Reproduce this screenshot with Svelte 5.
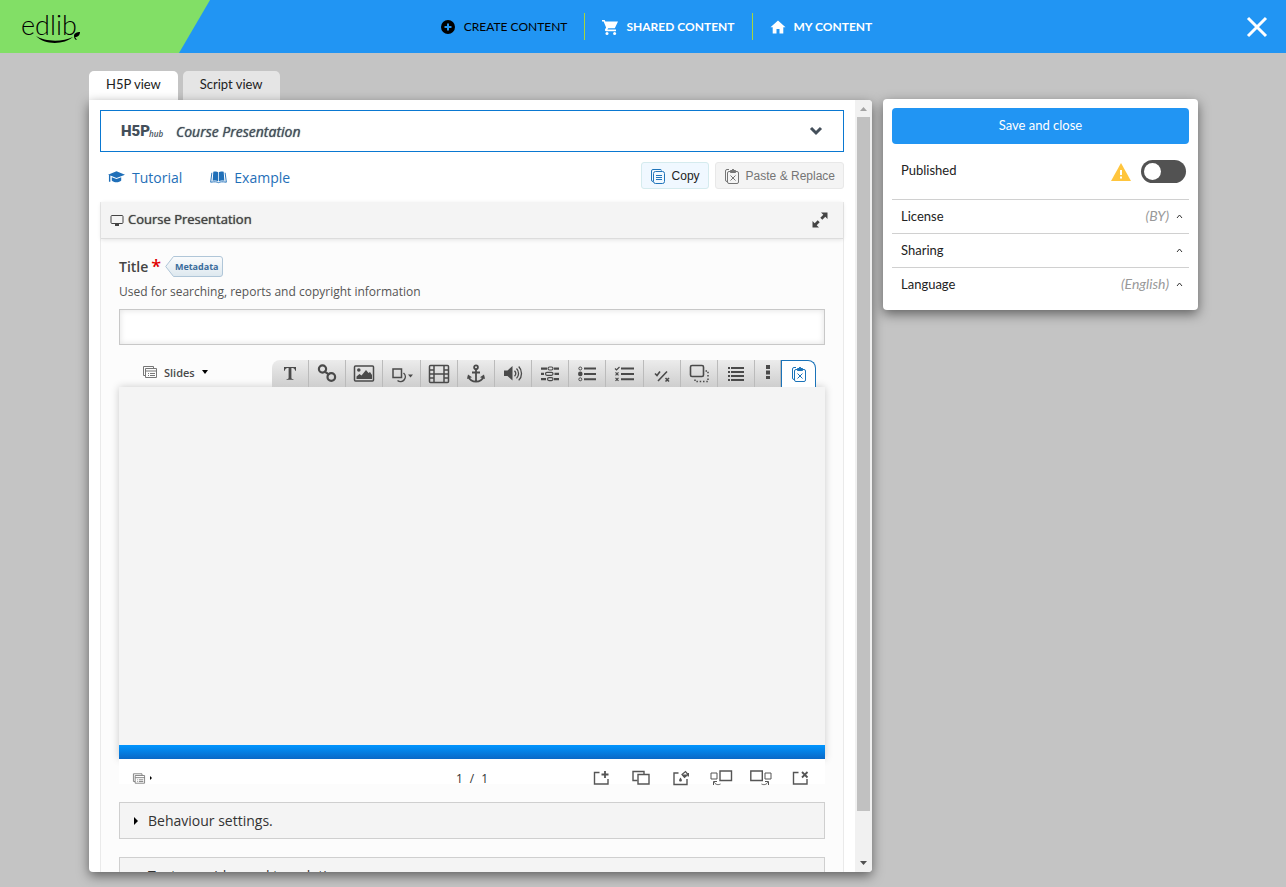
<script>
  let activeTab = $state("h5p");
  let title = $state("");
  let published = $state(false);

  const tabs = [
    { id: "h5p", label: "H5P view" },
    { id: "script", label: "Script view" },
  ];

  const navItems = [
    {
      label: "Create content",
      active: true,
      icon: '<path fill-rule="evenodd" d="M8 1a7 7 0 100 14A7 7 0 008 1zM7 4.500h2V7h2.500v2H9v2.500H7V9H4.500V7H7z"/>',
    },
    {
      label: "Shared content",
      icon: '<path d="M0 1h2.600l.8 1.600H16l-3.200 6.600H6.200L5.400 10.600H14v1.600H4.200c-1.200 0-1.600-1-1.100-1.900l1-1.800L1.600 2.600H0z"/><circle cx="5" cy="14.400" r="1.500"/><circle cx="12.600" cy="14.400" r="1.500"/>',
    },
    {
      label: "My content",
      icon: '<path d="M8 1.500l7.500 6.700h-2.200v6.300H9.500V10h-3v4.500H2.700V8.200H.5z"/>',
    },
  ];

  // Toolbar glyphs share a 22 x 20 box
  const tools = [
    {
      name: "Text",
      icon: '<path d="M5 3h12v3.800h-.8c-.4-2-1.200-2.800-2.800-2.800h-1v9.500c0 1.200.4 1.400 2 1.500v.8H7.600v-.8c1.600-.1 2-.3 2-1.500V4h-1c-1.600 0-2.400.8-2.800 2.800H5z" fill="currentColor"/>',
    },
    {
      name: "Link",
      icon: '<g fill="none" stroke="currentColor" stroke-width="2.200"><circle cx="6.500" cy="5" r="3.600"/><circle cx="15.300" cy="13" r="3.800"/><path d="M8 7.200l5.500 3.600"/></g>',
    },
    {
      name: "Image",
      icon: '<rect x="1.500" y="2" width="19" height="15" rx="1" fill="none" stroke="currentColor" stroke-width="1.500"/><circle cx="5.800" cy="6" r="1.800" fill="currentColor"/><path d="M3.500 15v-2.500l3-2.500 2 1.500 4.500-5.500 2.500 3 1.500-1 2 3v4z" fill="currentColor"/>',
    },
    {
      name: "Shapes",
      icon: '<g fill="none" stroke="currentColor" stroke-width="1.500"><path d="M2 5h8.500v8.500H2z"/><path d="M12.500 9a4.500 4.500 0 11-6 7.500"/></g><path d="M17 10.500h5l-2.500 3z" fill="currentColor"/>',
    },
    {
      name: "Video",
      icon: '<g fill="none" stroke="currentColor" stroke-width="1.500"><rect x="1.500" y="1.500" width="19" height="17" rx="1"/><path d="M6 2v16M16 2v16M6 10h10M1.500 6H6M1.500 10H6M1.500 14H6M16 6h4.500M16 10h4.500M16 14h4.500"/></g>',
    },
    {
      name: "Go to slide",
      icon: '<g fill="none" stroke="currentColor" stroke-width="1.800"><circle cx="11" cy="3.200" r="1.900"/><path d="M11 5.500V17.500M7 8.500h8M3.500 12.500c.5 3 4 5.200 7.500 5.200s7-2.200 7.500-5.200"/></g><path d="M2 15l1-4.500 4 2.800zM20 15l-1-4.500-4 2.800z" fill="currentColor"/>',
    },
    {
      name: "Audio",
      icon: '<path d="M2 6.500h3.500L10.500 2v14.500L5.500 12H2z" fill="currentColor"/><g fill="none" stroke="currentColor" stroke-width="1.300"><path d="M12.500 6.700a4 4 0 010 5.500M14.500 4.500a7 7 0 010 9.900M16.700 2.500a10 10 0 010 13.900"/></g>',
    },
    {
      name: "Fill in the Blanks",
      icon: '<g fill="currentColor"><path d="M2 3.500h6v2.200H2zM15 3.500h5v2.200h-5zM2 8.700h3v2.200H2zM15.500 8.700H20v2.200h-4.500zM2 14h5v2.200H2zM15 14h5v2.200h-5z"/></g><g fill="none" stroke="currentColor" stroke-width="1.200"><rect x="9" y="3" width="5" height="3" rx="1.500"/><rect x="6.500" y="8.300" width="7.500" height="3" rx="1.500"/><rect x="8.500" y="13.600" width="5.500" height="3" rx="1.500"/></g>',
    },
    {
      name: "Single Choice",
      icon: '<path d="M8 3.500h12v2H8zM8 8.900h12v2H8zM8 14.300h12v2H8z" fill="currentColor"/><g fill="none" stroke="currentColor"><circle cx="4.300" cy="4.500" r="1.500"/><circle cx="4.300" cy="15.300" r="1.500"/></g><circle cx="4.300" cy="9.900" r="2.300" fill="currentColor"/>',
    },
    {
      name: "Multiple Choice",
      icon: '<path d="M8 3.500h13v2H8zM8 8.900h13v2H8zM8 14.300h13v2H8z" fill="currentColor"/><path d="M2 4.500l1.500 1.500L6.500 3M2.500 8.300l3 3M5.500 8.300l-3 3M2.500 13.800l3 3M5.500 13.800l-3 3" fill="none" stroke="currentColor" stroke-width="1.200"/>',
    },
    {
      name: "True/False",
      icon: '<path d="M4 9.500l2 2 3-4M7 17L16 7.500M14.500 14l3.500 3.500M18 14l-3.500 3.500" fill="none" stroke="currentColor" stroke-width="1.600"/>',
    },
    {
      name: "Drag and Drop",
      icon: '<rect x="2.500" y="1.500" width="13" height="11" rx="1.500" fill="none" stroke="currentColor" stroke-width="1.600"/><path d="M17.500 7H20v10.500H7V15" fill="none" stroke="currentColor" stroke-width="1.500" stroke-dasharray="1.500 1.800"/>',
    },
    {
      name: "Summary",
      icon: '<path d="M3 3h2v2H3zM6 3h13v2H6zM3 7h2v2H3zM6 7h13v2H6zM3 11h2v2H3zM6 11h13v2H6zM3 15h2v2H3zM6 15h13v2H6z" fill="currentColor"/>',
    },
  ];

  // Slide controls share a 22 x 20 box
  const slideActions = [
    {
      name: "Add new slide",
      icon: '<path d="M9.500 4.500H4.500v11.500h13.500V11"/><path d="M15 3v7M11.500 6.500h7" stroke-width="1.800"/>',
    },
    {
      name: "Clone slide",
      icon: '<path d="M7.500 12.500H3v-9h11V6.500"/><path d="M8 6.500h11v9.500H8z"/>',
    },
    {
      name: "Background settings",
      icon: '<path d="M8.500 5H4v11.500h13V11"/><path d="M12 6.500L15.500 3.500l2.500 3-3.500 3z" stroke-width="1.200"/><path d="M12 6.500h6l-3.500 3z" fill="currentColor" stroke="none"/><path d="M18.300 5v3.500" /><path d="M10.500 9.500c-2 2.500-1.700 4 0 4s2-1.500 0-4z" fill="currentColor" stroke="none"/>',
    },
    {
      name: "Move slide left",
      icon: '<path d="M10 3h11.500v9.500H10z"/><path d="M1 5h6v6H1z" stroke-width="1"/><path d="M10.500 16c-3 1.500-5.500 0-6.500-2M3.500 17v-3.500H7" stroke-width="1"/>',
    },
    {
      name: "Move slide right",
      icon: '<path d="M.8 3h11.500v9.500H.8z"/><path d="M15 5h6v6h-6z" stroke-width="1"/><path d="M11.500 16c3 1.500 5.500 0 6.500-2M18.500 17v-3.500H15" stroke-width="1"/>',
    },
    {
      name: "Delete slide",
      icon: '<path d="M8.500 4.500H3.500v11.500h13.500V11"/><path d="M12 4l5.500 5.500M17.500 4l-5.500 5.500" stroke-width="1.800"/>',
    },
  ];

  const settings = [
    { label: "License", value: "(BY)" },
    { label: "Sharing", value: "" },
    { label: "Language", value: "(English)" },
  ];
</script>

{#snippet slidesIcon()}
  <svg class="slides-icon" viewBox="0 0 14 12" fill="none" stroke="currentColor">
    <path d="M2.500 9.500h-2v-9h10v2" />
    <path d="M2.500 2.500h11v9h-11zM2.500 5h11M5 7.500h1M7 7.500h5M5 9.500h1M7 9.500h5" />
  </svg>
{/snippet}

{#snippet pasteIcon()}
  <svg class="clip-icon" viewBox="0 0 16 16" fill="none" stroke="currentColor">
    <path d="M3 13.500q-1.500 0-1.500-1.500V3q0-1.500 1.500-1.500h2" />
    <path d="M6.500 3.500h-1.500q-1.500 0-1.500 1.500v9q0 1.500 1.500 1.500h8q1.500 0 1.500-1.500V5q0-1.500-1.500-1.500h-1.500" />
    <path d="M6.500 2.500h1.500l1-1.500 1 1.500h1.500v2h-5z" fill="currentColor" />
    <path d="M6.500 7.500l5 5M11.500 7.500l-5 5" />
  </svg>
{/snippet}

<div class="page">
  <header class="topbar">
    <a class="logo" href="#home" aria-label="edlib">
      <svg viewBox="0 0 64 32">
        <text x="0" y="24">edlib</text>
        <path d="M15 25c9 6 27 6 37 1-9 8-29 8-37-1z" />
        <path d="M53 25c0-3 3-4 6-4 0 3-2 5-5 5 1 1 1 2 2 3-2 0-3-2-3-4z" />
      </svg>
    </a>
    <nav>
      {#each navItems as item}
        <a href="#content" class:active={item.active}>
          <svg viewBox="0 0 16 16" fill="currentColor">{@html item.icon}</svg>
          {item.label}
        </a>
      {/each}
    </nav>
    <button class="close" aria-label="Close">
      <svg viewBox="0 0 22 22"><path d="M2 2l18 18M20 2L2 20" /></svg>
    </button>
  </header>

  <main>
    <section class="editor-column">
      <div class="tabs">
        {#each tabs as tab}
          <button class:selected={activeTab === tab.id} onclick={() => (activeTab = tab.id)}>
            {tab.label}
          </button>
        {/each}
      </div>

      <div class="panel">
        <div class="content">
          <button class="hub">
            <svg class="h5p" viewBox="0 0 42 16">
              <text class="h5p-name" x="0" y="13">H5P</text>
              <text class="h5p-hub" x="28" y="14">hub</text>
            </svg>
            <span>Course Presentation</span>
            <svg class="chevron" viewBox="0 0 14 10"><path d="M2 2l5 5 5-5" /></svg>
          </button>

          <div class="links">
            <a href="#tutorial">
              <svg viewBox="0 0 18 14" fill="currentColor">
                <path d="M9 1l9 3.500L9 8 2.500 5.500V12h-1.500V5L0 4.500z" />
                <path d="M4 7.200l5 2 5-2v3.600c-2 2.500-8 2.500-10 0z" />
              </svg>
              Tutorial
            </a>
            <a href="#example">
              <svg viewBox="0 0 18 14" fill="currentColor">
                <path d="M3.500 1.500C6 .8 7.500 1 8.600 2v9.500c-1.500-1-3.600-1-5.800-.5zM14.500 1.500C12 .8 10.500 1 9.400 2v9.500c1.500-1 3.600-1 5.800-.5z" />
                <path d="M2 2.500L.7 12.500c4-.6 6.500-.6 8.300.5 1.800-1.100 4.300-1.100 8.300-.5L16 2.500" fill="none" stroke="currentColor" />
              </svg>
              Example
            </a>
            <button class="clip copy">
              <svg class="clip-icon" viewBox="0 0 16 16" fill="none" stroke="currentColor">
                <path d="M3 13.500q-1.500 0-1.500-1.500V3q0-1.500 1.500-1.500h7q1.500 0 1.500 1" />
                <rect x="3.500" y="3.500" width="11" height="12" rx="2" />
                <path d="M6 7.500h6M6 9.500h6M6 11.500h6" />
              </svg>
              Copy
            </button>
            <button class="clip paste">{@render pasteIcon()} Paste &amp; Replace</button>
          </div>

          <div class="editor">
            <div class="editor-head">
              <svg class="screen" viewBox="0 0 14 12" fill="none" stroke="currentColor">
                <rect x="1" y="1.500" width="12" height="8" rx="1" />
                <path d="M5 11h4" stroke-width="2" />
              </svg>
              <h1>Course Presentation</h1>
              <button class="fullscreen" aria-label="Fullscreen">
                <svg viewBox="0 0 18 18" fill="currentColor">
                  <path d="M10 1.500h6.500V8l-2.200-2.200-3 3-2-2 3-3zM8 16.500H1.500V10l2.200 2.200 3-3 2 2-3 3z" />
                </svg>
              </button>
            </div>

            <div class="editor-body">
              <div class="title-row">
                <label for="title">Title<span>*</span></label>
                <button class="metadata">
                  <svg viewBox="0 0 58 21">
                    <defs>
                      <linearGradient id="meta" x1="0" y1="0" x2="0" y2="1">
                        <stop offset="0" stop-color="#fbfcfd" />
                        <stop offset="1" stop-color="#dde8ef" />
                      </linearGradient>
                    </defs>
                    <path d="M.7 10.500L8.500.5H55q2.500 0 2.500 2.500v15q0 2.500-2.500 2.500H8.500z" fill="url(#meta)" stroke="#b0c6d8" />
                  </svg>
                  <span>Metadata</span>
                </button>
              </div>
              <p class="hint">Used for searching, reports and copyright information</p>
              <input id="title" type="text" bind:value={title} />

              <div class="toolbar">
                <button class="slides">
                  {@render slidesIcon()}
                  Slides
                  <svg class="caret" viewBox="0 0 6 4"><path d="M0 0h6L3 4z" /></svg>
                </button>
                <div class="tools">
                  {#each tools as tool}
                    <button aria-label={tool.name}>
                      <svg viewBox="0 0 22 20">{@html tool.icon}</svg>
                    </button>
                  {/each}
                  <button class="more" aria-label="More">
                    <svg viewBox="0 0 4 20"><path d="M0 1h4v4H0zM0 6.500h4v4H0zM0 12h4v3H0z" fill="currentColor" /></svg>
                  </button>
                  <button class="paste-tool" aria-label="Paste">{@render pasteIcon()}</button>
                </div>
              </div>

              <div class="stage">
                <div class="canvas"></div>
                <div class="progress"></div>
              </div>

              <div class="slide-footer">
                <button class="slide-list" aria-label="Show slides">
                  {@render slidesIcon()}
                  <svg class="dot" viewBox="0 0 2 4"><path d="M0 0l2 2-2 2z" /></svg>
                </button>
                <div class="counter"><span>1</span><span>/</span><span>1</span></div>
                <div class="slide-actions">
                  {#each slideActions as action}
                    <button aria-label={action.name}>
                      <svg viewBox="0 0 22 20" fill="none" stroke="currentColor" stroke-width="1.400">
                        {@html action.icon}
                      </svg>
                    </button>
                  {/each}
                </div>
              </div>

              {#each ["Behaviour settings.", "Text overrides and translations"] as group}
                <button class="group">
                  <svg viewBox="0 0 4 8"><path d="M0 0l4 4-4 4z" /></svg>
                  {group}
                </button>
              {/each}
            </div>
          </div>
        </div>

        <div class="scrollbar">
          <svg viewBox="0 0 17 17"><path d="M5 11h7L8.500 7z" fill="#a3a3a3" /></svg>
          <div class="thumb"></div>
          <svg viewBox="0 0 17 17"><path d="M5 6h7l-3.500 4z" fill="#505050" /></svg>
        </div>
      </div>
    </section>

    <aside>
      <button class="save">Save and close</button>
      <div class="published">
        <label for="published">Published</label>
        <svg viewBox="0 0 20 18">
          <path d="M10 0l10 18H0z" fill="#ffc53d" />
          <path d="M9 7h2v5H9zM9 13.500h2v2H9z" fill="#fff" />
        </svg>
        <input id="published" type="checkbox" bind:checked={published} />
      </div>
      {#each settings as setting}
        <button class="setting">
          <span>{setting.label}</span>
          <em>{setting.value}</em>
          <svg viewBox="0 0 7 5"><path d="M1 4l2.500-3L6 4" /></svg>
        </button>
      {/each}
    </aside>
  </main>
</div>

<style>
  :global(body) {
    background: #c4c4c4;
  }

  .page {
    height: 100vh;
    display: flex;
    flex-direction: column;
    overflow: hidden;
    font-family: Lato, sans-serif;
    font-size: 13px;
    color: #222;
  }

  .page :global(*) {
    box-sizing: border-box;
  }

  svg {
    display: block;
    flex: none;
    overflow: visible;
  }

  button {
    font: inherit;
    color: inherit;
    background: none;
    border: 0;
    padding: 0;
    cursor: pointer;
  }

  a {
    text-decoration: none;
  }

  .topbar {
    display: grid;
    grid-template-columns: 210px 1fr 184px;
    flex: none;
    height: 53px;
    background: #2195f3;
  }

  .logo {
    display: flex;
    align-items: center;
    padding-left: 21px;
    background: #82df66;
    clip-path: polygon(0 0, 100% 0, 179px 100%, 0 100%);
  }

  .logo svg {
    width: 64px;
    height: 32px;
  }

  .logo text {
    font-size: 27px;
    font-weight: 300;
  }

  nav {
    display: flex;
    align-items: center;
    justify-content: center;
  }

  nav a {
    display: flex;
    align-items: center;
    gap: 8px;
    height: 27px;
    padding: 0 17px;
    border-left: 1px solid #a6d63c;
    color: #fff;
    font-size: 12px;
    font-weight: 700;
    text-transform: uppercase;
    white-space: nowrap;
  }

  nav a.active {
    border-left: 0;
    color: #000;
    font-weight: 400;
  }

  nav svg {
    width: 16px;
    height: 16px;
  }

  .close {
    justify-self: end;
    padding: 0 18px;
  }

  .close svg {
    width: 22px;
    height: 22px;
    stroke: #fff;
    stroke-width: 3;
  }

  main {
    display: grid;
    grid-template-columns: minmax(0, 1fr) 315px;
    gap: 11px;
    flex: 1;
    min-height: 0;
    padding: 18px 88px 15px 89px;
  }

  .editor-column {
    display: flex;
    flex-direction: column;
    min-height: 0;
  }

  .tabs {
    display: flex;
    gap: 5px;
    height: 29px;
  }

  .tabs button {
    padding: 0 17px 3px;
    background: #e5e5e5;
    border-radius: 5px 5px 0 0;
  }

  .tabs button.selected {
    background: #fff;
  }

  .panel {
    display: flex;
    flex: 1;
    min-height: 0;
    overflow: hidden;
    background: #fff;
    border-radius: 0 4px 4px 4px;
    box-shadow: 0 4px 12px rgba(0, 0, 0, 0.5);
  }

  .content {
    flex: 1;
    min-width: 0;
    padding: 10px 11px 0;
    overflow: hidden;
    font-family: "Open Sans", sans-serif;
    font-size: 14px;
    color: #333;
  }

  .scrollbar {
    display: flex;
    flex-direction: column;
    width: 17px;
    background: #f1f1f1;
  }

  .scrollbar svg {
    width: 17px;
    height: 17px;
  }

  .thumb {
    flex: 1;
    margin: 0 2px 44px;
    background: #c1c1c1;
  }

  .hub {
    display: flex;
    align-items: center;
    width: 100%;
    height: 42px;
    padding: 0 20px;
    border: 1px solid #0a78d1;
    color: #444f5a;
    font-style: italic;
  }

  .hub span,
  h1 {
    text-shadow: 0 0 1px currentColor;
  }

  .h5p {
    width: 42px;
    height: 16px;
    margin-right: 13px;
    fill: #444f5a;
  }

  .h5p-name {
    font: 900 15px Roboto, sans-serif;
  }

  .h5p-hub {
    font: italic 600 8px "Open Sans", sans-serif;
  }

  .chevron {
    width: 14px;
    height: 10px;
    margin-left: auto;
    fill: none;
    stroke: #444f5a;
    stroke-width: 3;
  }

  .links {
    display: flex;
    align-items: center;
    height: 50px;
    padding-left: 8px;
  }

  .links a {
    display: flex;
    align-items: center;
    gap: 7px;
    margin-right: 28px;
    color: #1f6fb8;
  }

  .links a svg {
    width: 17px;
    height: 14px;
  }

  .clip {
    display: flex;
    align-items: center;
    gap: 6px;
    height: 27px;
    margin-bottom: 4px;
    padding: 1px 8px 0;
    border: 1px solid #e8e8e8;
    border-radius: 3px;
    background: #f4f4f4;
    color: #757575;
    font: 12px "Liberation Sans", sans-serif;
  }

  .clip-icon {
    width: 16px;
    height: 16px;
  }

  .copy {
    margin-left: auto;
    margin-right: 6px;
    border-color: #d5ebee;
    background: #f0f8ff;
    color: #222;
  }

  .copy svg {
    color: #1f74ba;
  }

  .editor {
    border: 1px solid #eaeaea;
    border-top: 0;
    background: #fcfcfc;
  }

  .editor-head {
    display: flex;
    align-items: center;
    height: 37px;
    padding: 0 14px 0 9px;
    border-bottom: 1px solid #dcdcdc;
    background: #f4f4f4;
    box-shadow: 0 1px 4px rgba(0, 0, 0, 0.1);
    color: #444;
  }

  .screen {
    width: 14px;
    height: 12px;
    margin-right: 4px;
  }

  h1 {
    margin: 0;
    padding-bottom: 2px;
    font-size: 13px;
    font-weight: 400;
  }

  .fullscreen {
    margin-left: auto;
  }

  .fullscreen svg {
    width: 18px;
    height: 18px;
  }

  .editor-body {
    padding: 17px 18px;
  }

  .title-row {
    display: flex;
    align-items: center;
    gap: 4px;
    height: 21px;
    color: #444;
    font-weight: 600;
  }

  .title-row label {
    display: flex;
    line-height: 20px;
  }

  .title-row label span {
    padding-left: 3px;
    color: #e00000;
    font-size: 18px;
    line-height: 18px;
  }

  .metadata {
    position: relative;
    width: 58px;
    height: 21px;
    padding-left: 5px;
    color: #3a6c9c;
    font-size: 9px;
    font-weight: 700;
  }

  .metadata svg {
    position: absolute;
    inset: 0;
  }

  .metadata span {
    position: relative;
  }

  .hint {
    margin: 7px 0 9px;
    font-size: 12px;
    line-height: 16px;
    color: #555;
  }

  input[type="text"] {
    display: block;
    width: 100%;
    height: 36px;
    padding: 0 10px;
    border: 1px solid #c8c8c8;
    background: #fff;
    box-shadow: inset 0 0 6px rgba(0, 0, 0, 0.12);
    font: inherit;
  }

  .toolbar {
    display: flex;
    justify-content: space-between;
    height: 27px;
    margin-top: 15px;
    padding: 0 9px 0 24px;
    color: #4a4a4a;
  }

  .slides {
    display: flex;
    align-items: center;
    gap: 7px;
    padding-bottom: 3px;
    font-size: 11px;
    font-weight: 600;
  }

  .slides-icon {
    width: 14px;
    height: 12px;
    color: #777;
  }

  .caret {
    width: 6px;
    height: 4px;
  }

  .tools {
    display: flex;
    width: 544px;
  }

  .tools button {
    display: flex;
    align-items: center;
    justify-content: center;
    flex: 1;
    border-right: 1px solid #bbb;
    background: linear-gradient(#ececec, #cecece);
  }

  .tools button:first-child {
    border-top-left-radius: 8px;
  }

  .tools button > svg {
    width: 22px;
    height: 20px;
  }

  .tools .more {
    flex: 0 0 26px;
  }

  .tools .more svg {
    width: 4px;
  }

  .tools .paste-tool {
    flex: 0 0 35px;
    border: 1px solid #1a73b9;
    border-bottom: 0;
    border-top-right-radius: 8px;
    background: #fff;
    color: #1a73b9;
  }

  .tools .paste-tool :global(svg) {
    width: 16px;
    height: 16px;
  }

  .stage {
    box-shadow: 0 0 8px rgba(0, 0, 0, 0.2);
  }

  .canvas {
    aspect-ratio: 706 / 358;
    background: #f4f4f4;
  }

  .progress {
    height: 14px;
    background: linear-gradient(#0095ff, #0a68c6);
  }

  .slide-footer {
    position: relative;
    display: grid;
    grid-template-columns: 1fr auto 1fr;
    align-items: start;
    height: 25px;
    padding: 4px 7px 0;
    background: #fff;
    color: #555;
  }

  .slide-list {
    display: flex;
    align-items: center;
    gap: 5px;
    height: 30px;
    padding-left: 7px;
  }

  .slide-list .slides-icon {
    width: 12px;
    height: 11px;
  }

  .dot {
    width: 2px;
    height: 4px;
  }

  .counter {
    display: flex;
    gap: 7px;
    color: #333;
    font-size: 12px;
    line-height: 32px;
  }

  .slide-actions {
    display: flex;
    justify-content: flex-end;
    gap: 6px;
  }

  .slide-actions button {
    display: flex;
    align-items: center;
    justify-content: center;
    width: 34px;
    height: 30px;
  }

  .slide-actions svg {
    width: 22px;
    height: 20px;
  }

  .group {
    display: flex;
    align-items: center;
    gap: 10px;
    width: 100%;
    height: 37px;
    margin-top: 18px;
    padding: 0 14px;
    border: 1px solid #cfcfcf;
    background: #f4f4f4;
  }

  .group svg {
    width: 4px;
    height: 8px;
  }

  aside {
    align-self: start;
    margin-top: 28px;
    padding: 9px;
    border-radius: 4px;
    background: #fff;
    box-shadow: 0 4px 12px rgba(0, 0, 0, 0.5);
  }

  .save {
    width: 100%;
    height: 36px;
    padding-bottom: 3px;
    border-radius: 4px;
    background: #2195f3;
    color: #fff;
  }

  .published {
    display: flex;
    align-items: center;
    gap: 10px;
    height: 55px;
    padding: 0 3px 0 9px;
  }

  .published svg {
    width: 20px;
    height: 18px;
  }

  .published label {
    flex: 1;
    padding-bottom: 3px;
  }

  input[type="checkbox"] {
    appearance: none;
    display: flex;
    align-items: center;
    width: 45px;
    height: 23px;
    margin: 0;
    padding: 0 3px;
    border-radius: 12px;
    background: #525252;
  }

  input[type="checkbox"]::before {
    content: "";
    width: 17px;
    height: 17px;
    border-radius: 50%;
    background: #fff;
  }

  input[type="checkbox"]:checked {
    justify-content: flex-end;
    background: #2195f3;
  }

  .setting {
    display: flex;
    align-items: center;
    width: 100%;
    height: 34px;
    padding: 0 6px 0 9px;
    border-top: 1px solid #d0d0d0;
  }

  .setting span,
  .setting em {
    padding-bottom: 2px;
  }

  .setting em {
    margin-left: auto;
    color: #999;
    font-size: 14px;
  }

  .setting svg {
    width: 7px;
    height: 5px;
    margin-left: 7px;
    fill: none;
    stroke: #333;
  }
</style>
